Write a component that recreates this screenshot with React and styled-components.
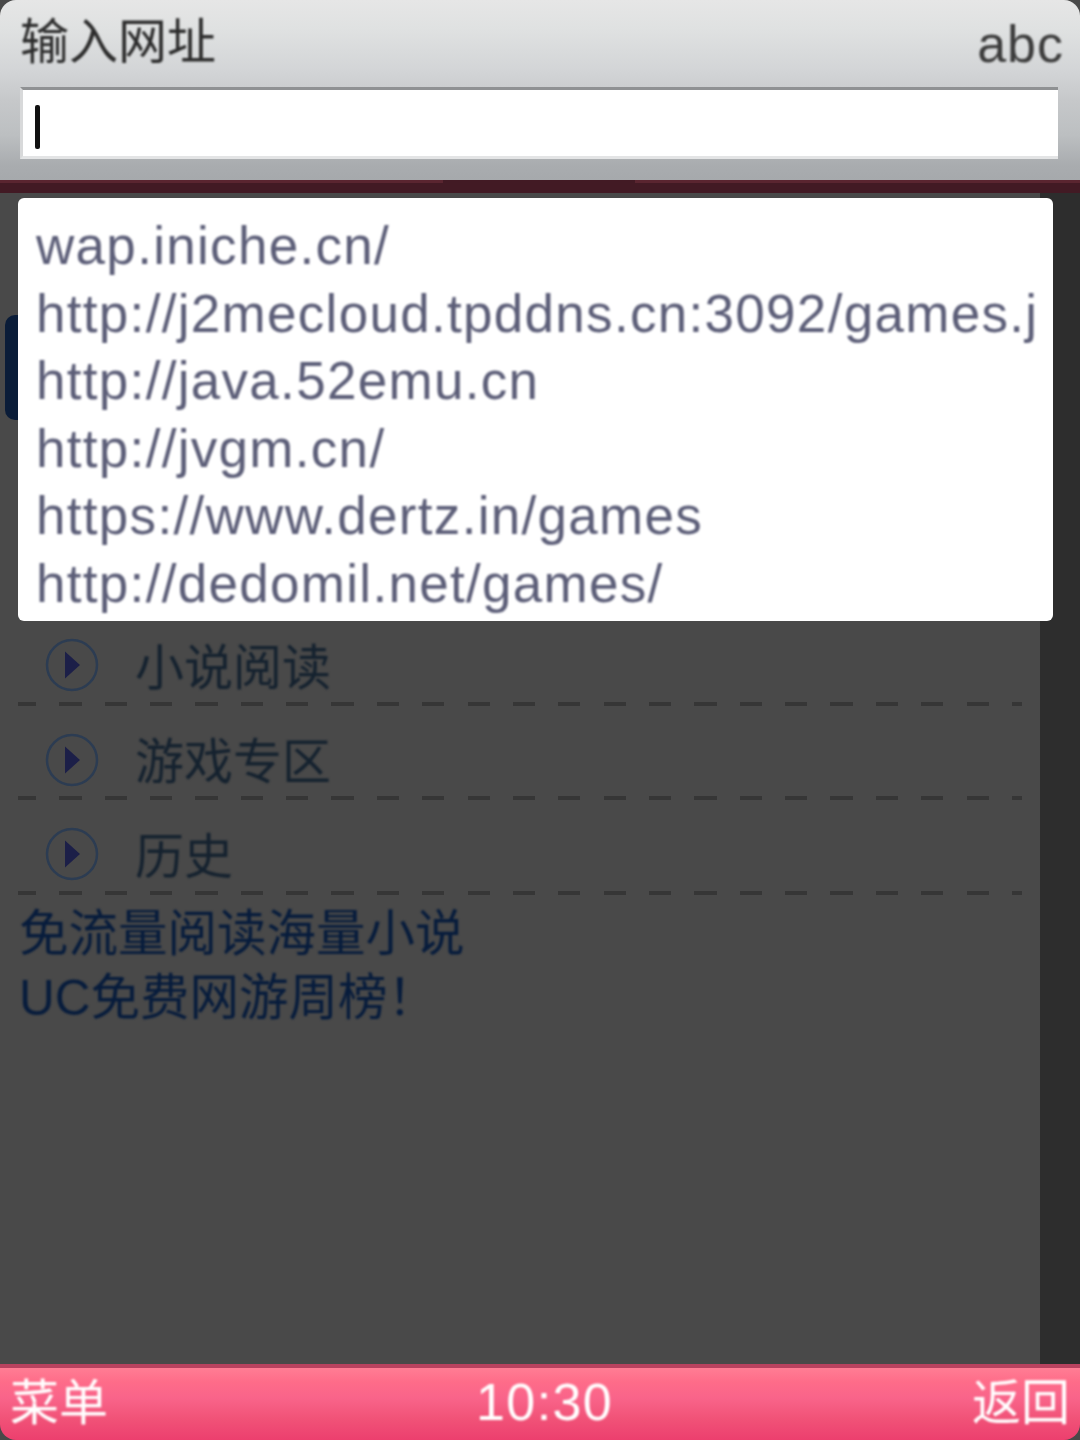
import React from "react";
import styled, { createGlobalStyle } from "styled-components";

const Global = createGlobalStyle`
  html, body { margin: 0; padding: 0; background: #000; }
  body { font-family: "Liberation Sans", "Noto Sans CJK SC", sans-serif; }
`;

const Screen = styled.div`
  width: 1080px;
  height: 1440px;
  display: flex;
  flex-direction: column;
  overflow: hidden;
  position: relative;
  background: #494949;
`;

const Header = styled.header`
  height: 180px;
  box-sizing: border-box;
  padding: 0 16px 0 20px;
  border-radius: 16px 16px 0 0;
  background: linear-gradient(#e6e6e6 0, #dfe1e1 30px, #d3d5d7 70px, #c6c8ca 100px, #bcbfc1 135px, #a9acaf 165px, #a6a9ac 180px);
  display: flex;
  flex-direction: column;
`;

const TitleRow = styled.div`
  height: 87px;
  display: flex;
  justify-content: space-between;
  align-items: center;
  color: #2c2c2c;
  font-size: 49px;
  filter: blur(1.1px);
`;

const Title = styled.span`
  line-height: 1;
  margin-top: -2px;
`;

const Mode = styled.span`
  font-size: 52px;
  letter-spacing: 1px;
  line-height: 1;
  color: #3c3c3c;
`;

const UrlInput = styled.div`
  height: 72px;
  margin-right: 6px;
  box-sizing: border-box;
  background: #fff;
  border-top: 3px solid #8f9193;
  border-left: 3px solid #d8d9da;
  border-bottom: 3px solid #e3e4e5;
  padding: 15px 0 0 12px;
`;

const Caret = styled.div`
  width: 5px;
  height: 44px;
  background: #111;
  border-radius: 2px;
`;

const Divider = styled.div`
  height: 13px;
  background:
    linear-gradient(90deg, #5a2530 0 443px, #421a24 443px 635px, #5a2530 635px) top / 100% 3px no-repeat,
    #421a24;
`;

const Body = styled.main`
  flex: 1;
  position: relative;
  display: flex;
  min-height: 0;
`;

const Page = styled.div`
  flex: 1;
  padding: 122px 18px 0 0;
  display: flex;
  flex-direction: column;
`;

const Scrollbar = styled.div`
  width: 40px;
  background: #2d2d2d;
`;

const Focused = styled.div`
  height: 105px;
  margin-left: 5px;
  width: 40px;
  box-sizing: border-box;
  border-left: 14px solid #0a1c38;
  border-radius: 10px 0 0 10px;
  margin-bottom: 191px;
`;

const Rows = styled.ul`
  list-style: none;
  margin: 0;
  padding: 0 0 0 18px;
`;

const Row = styled.li`
  height: 94.5px;
  box-sizing: border-box;
  padding: 24px 0 0 27px;
  display: flex;
  align-items: center;
  gap: 36px;
  border-bottom: 4px dashed #363636;
  border-image: repeating-linear-gradient(90deg, #363636 0 22px, transparent 22px 45px) 4;
`;

const RowIcon = styled.svg`
  width: 54px;
  height: 54px;
  flex: none;
  margin-top: -6px;
  filter: blur(0.7px);
`;

const RowLabel = styled.span`
  font-size: 49px;
  line-height: 1;
  color: #15222f;
  filter: blur(1.1px);
`;

const Promo = styled.div`
  margin: 7px 0 0 19px;
  font-size: 49.5px;
  line-height: 64px;
  color: #071c3c;
  filter: blur(1.1px);
`;

const Popup = styled.ul`
  position: absolute;
  left: 18px;
  top: 5px;
  width: 1035px;
  height: 423px;
  margin: 0;
  padding: 14px 0 0 18px;
  box-sizing: border-box;
  list-style: none;
  background: #fff;
  border-radius: 6px;
  overflow: hidden;
`;

const Suggestion = styled.li`
  height: 67.6px;
  font-size: 53px;
  letter-spacing: 1.3px;
  line-height: 67.6px;
  color: #5c5e78;
  white-space: nowrap;
  filter: blur(1.2px);
`;

const Footer = styled.footer`
  height: 76px;
  box-sizing: border-box;
  border-radius: 0 0 16px 16px;
  border-top: 4px solid #b8425f;
  background: linear-gradient(#ff7d94 0, #fe6c89 14px, #f9648a 30px, #f15378 50px, #ec3f6e 72px);
  display: flex;
  justify-content: space-between;
  align-items: center;
  padding: 0 10px 0 10px;
  color: #fff;
  font-size: 49px;
  position: relative;
`;

const SoftKey = styled.span`
  line-height: 1;
  filter: blur(1px);
  margin-top: -2px;
`;

const Clock = styled.span`
  position: absolute;
  left: 476px;
  top: 6px;
  font-size: 52px;
  letter-spacing: 1.4px;
  line-height: 56px;
  filter: blur(1px);
`;

const urls = [
  "wap.iniche.cn/",
  "http://j2mecloud.tpddns.cn:3092/games.j",
  "http://java.52emu.cn",
  "http://jvgm.cn/",
  "https://www.dertz.in/games",
  "http://dedomil.net/games/",
];

const links = ["小说阅读", "游戏专区", "历史"];

const PlayIcon = () => (
  <RowIcon viewBox="0 0 54 54">
    <circle cx="27" cy="27" r="25" fill="none" stroke="#2c3c52" strokeWidth="2.5" />
    <path d="M20 13.5 L35 27 L20 40.5 Z" fill="#1c1f48" />
  </RowIcon>
);

export default function App() {
  return (
    <>
      <Global />
      <Screen>
        <Header>
          <TitleRow>
            <Title>输入网址</Title>
            <Mode>abc</Mode>
          </TitleRow>
          <UrlInput>
            <Caret />
          </UrlInput>
        </Header>
        <Divider />
        <Body>
          <Page>
            <Focused />
            <Rows>
              {links.map((l) => (
                <Row key={l}>
                  <PlayIcon />
                  <RowLabel>{l}</RowLabel>
                </Row>
              ))}
            </Rows>
            <Promo>
              免流量阅读海量小说
              <br />
              UC免费网游周榜！
            </Promo>
          </Page>
          <Scrollbar />
          <Popup>
            {urls.map((u) => (
              <Suggestion key={u}>{u}</Suggestion>
            ))}
          </Popup>
        </Body>
        <Footer>
          <SoftKey>菜单</SoftKey>
          <Clock>10:30</Clock>
          <SoftKey>返回</SoftKey>
        </Footer>
      </Screen>
    </>
  );
}
